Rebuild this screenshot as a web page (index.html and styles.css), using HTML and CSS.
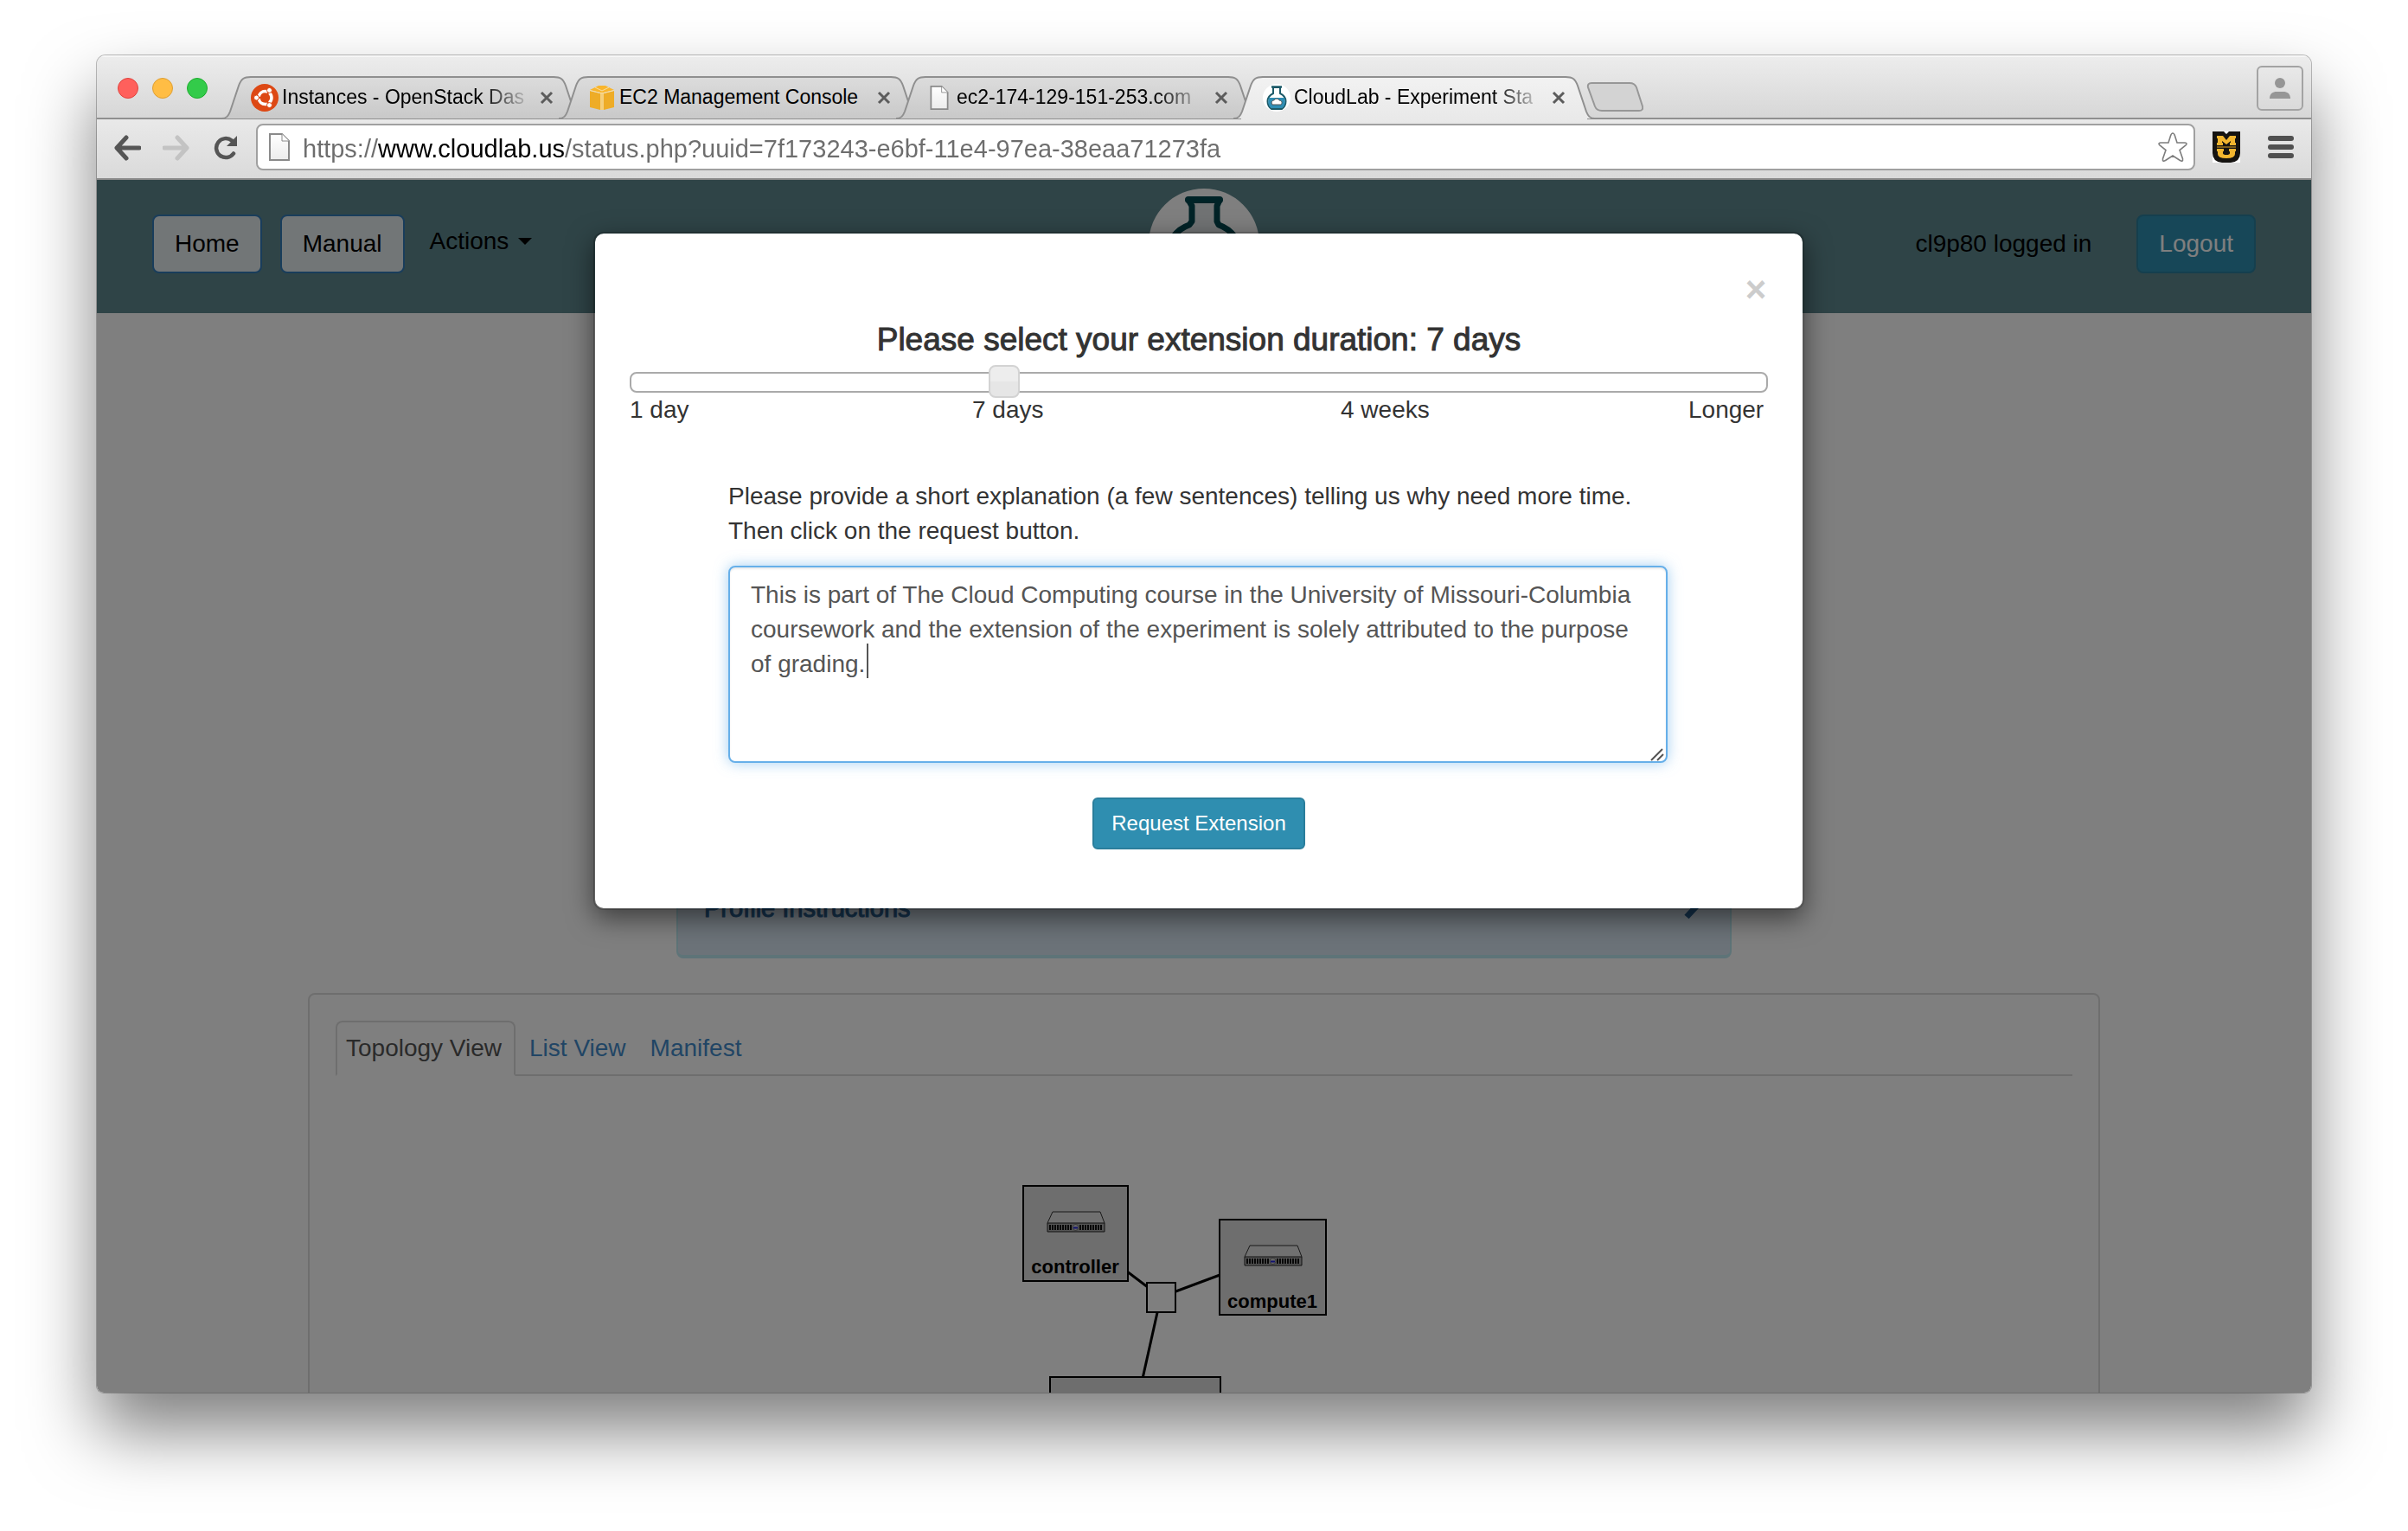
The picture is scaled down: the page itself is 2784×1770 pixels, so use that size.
FILE: index.html
```html
<!DOCTYPE html>
<html lang="en">
<head>
<meta charset="utf-8">
<title>CloudLab - Experiment Status</title>
<link rel="stylesheet" href="styles.css">
</head>
<body>
<svg width="0" height="0" class="defs" aria-hidden="true">
  <defs>
    <linearGradient id="tabFill" x1="0" y1="0" x2="0" y2="1"><stop offset="0" stop-color="#dcdcdc"/><stop offset="1" stop-color="#c9c9c9"/></linearGradient>
    <linearGradient id="tabActive" x1="0" y1="0" x2="0" y2="1"><stop offset="0" stop-color="#f2f2f2"/><stop offset="1" stop-color="#e9e9e9"/></linearGradient>
    <linearGradient id="pageFill" x1="0" y1="0" x2="0" y2="1"><stop offset="0" stop-color="#fff"/><stop offset="1" stop-color="#ececec"/></linearGradient>
    <symbol id="tabShape" viewBox="0 0 418 50">
      <path d="M0 49C6 49 8 46 10 41L20 11C23 3 26 1 34 1H384C392 1 395 3 398 11L408 41C410 46 412 49 418 49" stroke="#8f8f8f" stroke-width="2"/>
    </symbol>
    <symbol id="page" viewBox="0 0 24 32">
      <path d="M1 1H15L23 9V31H1Z" fill="url(#pageFill)" stroke="#8a8a8a" stroke-width="2"/>
      <path d="M15 1V9H23" fill="#fff" stroke="#8a8a8a" stroke-width="1"/>
    </symbol>
    <symbol id="cross" viewBox="0 0 20 20">
      <path d="M4 4L16 16M16 4L4 16" stroke="#5c5c5c" stroke-width="3"/>
    </symbol>
    <symbol id="server" viewBox="0 0 68 25">
      <path d="M1 14L7 1H62L67 14" fill="#e0e0e0" stroke="#333"/>
      <path d="M1 14H67V24H1Z" fill="#aaa" stroke="#222"/>
      <path d="M3 19H29M38 19H65" stroke="#111" stroke-width="6" stroke-dasharray="2 1"/>
      <circle cx="33.500" cy="19" r="3.500" fill="#ccc" stroke="#444" stroke-width=".6"/>
      <path d="M31 18.500H36V20.500H31Z" fill="#2222dd"/>
    </symbol>
  </defs>
</svg>

<div class="window">
  <div class="tabstrip">
    <div class="lights"><span class="light red"></span><span class="light amber"></span><span class="light green"></span></div>
    <div class="tabs">
      <div class="tab">
        <svg class="tab-bg" fill="url(#tabFill)"><use href="#tabShape"/></svg>
        <svg class="favicon" viewBox="0 0 32 32"><circle cx="16" cy="16" r="16" fill="#dd4814"/><circle cx="16.500" cy="16" r="7.500" fill="none" stroke="#fff" stroke-width="3.500" stroke-dasharray="13.200 2.500" stroke-dashoffset="6.600"/><g fill="#fff" stroke="#dd4814"><circle cx="6.500" cy="16" r="3"/><circle cx="21.500" cy="7.400" r="3"/><circle cx="21.500" cy="24.600" r="3"/></g></svg>
        <span class="tab-title faded">Instances - OpenStack Das</span>
        <button class="tab-close" aria-label="Close tab"><svg><use href="#cross"/></svg></button>
      </div>
      <div class="tab">
        <svg class="tab-bg" fill="url(#tabFill)"><use href="#tabShape"/></svg>
        <svg class="favicon" viewBox="0 0 32 32"><path d="M2 7L12 2H20L30 7L18 10H14Z" fill="#f9b52c"/><path d="M2 8L14 11V30L2 27Z" fill="#eeac27"/><path d="M30 8L18 11V30L30 27Z" fill="#eeac27"/><path d="M14 11H18V30H14Z" fill="#f5cf7c"/><path d="M2 7.500L14 10.500H18L30 7.500M8 4L16 8L24 4" fill="none" stroke="#f8dfa6" stroke-width="1"/></svg>
        <span class="tab-title">EC2 Management Console</span>
        <button class="tab-close" aria-label="Close tab"><svg><use href="#cross"/></svg></button>
      </div>
      <div class="tab">
        <svg class="tab-bg" fill="url(#tabFill)"><use href="#tabShape"/></svg>
        <svg class="favicon favicon-page"><use href="#page"/></svg>
        <span class="tab-title faded">ec2-174-129-151-253.com</span>
        <button class="tab-close" aria-label="Close tab"><svg><use href="#cross"/></svg></button>
      </div>
      <div class="tab active">
        <svg class="tab-bg" fill="url(#tabActive)"><use href="#tabShape"/></svg>
        <svg class="favicon" viewBox="0 0 32 32"><circle cx="16" cy="16" r="16" fill="#fff"/><path d="M12 4V11C8 13 5.500 16 5.500 20C5.500 24 8 27.500 10 29H22C24 27.500 26.500 24 26.500 20C26.500 16 24 13 20 11V4Z" fill="#fff" stroke="#1d5a68" stroke-width="2"/><path d="M7 16H25C27 22 25 26 22 28H10C7 26 5 22 7 16Z" fill="#2f8eb4"/><path d="M10 3.500H22" stroke="#1d5a68" stroke-width="2.500"/><path d="M11 24C9 21 11 19 13 19C14 16.500 18 16.500 19 19C22 19 23 22 21 24Z" fill="#fff" stroke="#555" stroke-width="1"/></svg>
        <span class="tab-title faded">CloudLab - Experiment Sta</span>
        <button class="tab-close" aria-label="Close tab"><svg><use href="#cross"/></svg></button>
      </div>
    </div>
    <button class="newtab" aria-label="New tab"><svg viewBox="0 0 66 34"><path d="M6 1H50Q56 1 58 6L65 28Q66 33 61 33H18Q12 33 10 28L2 6Q1 1 6 1Z" fill="#d3d3d3" stroke="#979797" stroke-width="2"/></svg></button>
    <button class="user" aria-label="User"><svg viewBox="0 0 26 26"><ellipse cx="13" cy="7" rx="6" ry="6" fill="#969696"/><path d="M1 25C1 19 5 17 9 17H17C21 17 25 19 25 25Z" fill="#969696"/></svg></button>
  </div>

  <div class="toolbar">
    <button class="nav-btn" aria-label="Back"><svg viewBox="0 0 32 32"><path d="M15 5L4 17L15 29M5 17H30" fill="none" stroke="#555" stroke-width="5" stroke-linecap="round" stroke-linejoin="round"/></svg></button>
    <button class="nav-btn" aria-label="Forward"><svg viewBox="0 0 32 32"><path d="M17 5L28 17L17 29M27 17H2" fill="none" stroke="#c3c3c3" stroke-width="5" stroke-linecap="round" stroke-linejoin="round"/></svg></button>
    <button class="nav-btn" aria-label="Reload"><svg viewBox="0 0 32 32"><path d="M25 23.500A11 11 0 1 1 23 8.500" fill="none" stroke="#555" stroke-width="4.500" stroke-linecap="round"/><path d="M29 3V15H17Z" fill="#555"/></svg></button>
    <div class="omnibox">
      <svg class="page-icon"><use href="#page"/></svg>
      <input class="url" type="text" aria-label="Address" value="https://www.cloudlab.us/status.php?uuid=7f173243-e6bf-11e4-97ea-38eaa71273fa">
      <svg class="star" viewBox="0 0 36 36"><path d="M18 2Q19.500 2 20.500 5L23 13H32Q35.500 13.500 33 16L26 21.500L29.500 31.500Q30 35.500 26.500 33.500L18 28L9.500 33.500Q6 35.500 6.500 31.500L10 21.500L3 16Q.5 13.500 4 13H13L15.500 5Q16.500 2 18 2Z" fill="#fff" stroke="#7d7d7d" stroke-width="1.600"/></svg>
    </div>
    <svg class="mu" viewBox="0 0 32 36"><path d="M0 0H32V36H0Z" fill="#fff"/><path d="M0 0H13L16 3L19 0H32V25Q32 35 21 36H11Q0 35 0 25Z" fill="#151310"/><path d="M5 5H12L16 10L20 5H27V8H26V13H27V16H20V13H21V11L16 15L11 11V13H12V16H5V13H6V8H5Z" fill="#f2b52f"/><path d="M5 20H13V23H12V25Q12 27 16 27Q20 27 20 25V23H19V20H27V23H26V26Q26 31 16 31Q6 31 6 26V23H5Z" fill="#f2b52f"/><path d="M5 17H27V19H5Z" fill="#7a5c1c"/></svg>
    <button class="menu" aria-label="Menu"><svg viewBox="0 0 30 26"><path d="M3 3H27M3 13H27M3 23H27" stroke="#505050" stroke-width="6" stroke-linecap="round"/></svg></button>
  </div>

  <div class="viewport">
    <header class="navbar">
      <nav class="nav-left">
        <a class="btn btn-light" href="#">Home</a>
        <a class="btn btn-light" href="#">Manual</a>
        <a class="dropdown" href="#">Actions <span class="caret"></span></a>
      </nav>
      <svg class="logo" viewBox="0 0 128 128"><circle cx="64" cy="64" r="64" fill="#fff"/><path d="M46 13H82L79 20V38L81 42Q104 50 108 80Q106 110 64 114Q22 110 20 80Q24 50 47 42L50 38V20Z" fill="#e2e7e9" stroke="#00464f" stroke-width="7" stroke-linejoin="round"/><path d="M46 13H82" stroke="#00464f" stroke-width="8" stroke-linecap="round"/></svg>
      <div class="nav-right">
        <span>cl9p80 logged in</span>
        <button class="btn btn-primary">Logout</button>
      </div>
    </header>
    <main class="content">
      <a class="instructions" href="#"><span>Profile Instructions</span>
        <svg viewBox="0 0 22 34"><path d="M4 4L16 17L4 30" fill="none" stroke="#2a6496" stroke-width="7"/></svg></a>
      <section class="panel">
        <div class="view-tabs">
          <a class="view-tab current" href="#">Topology View</a>
          <a class="view-tab" href="#">List View</a>
          <a class="view-tab" href="#">Manifest</a>
        </div>
        <svg class="topology" viewBox="0 0 640 420">
          <g stroke="#000" stroke-width="3"><path d="M172 121L270 195.500L400 147"/><path d="M270 195.500L240 330"/></g>
          <g fill="#dcdcdc" stroke="#000" stroke-width="2">
            <path d="M111 67H232V177H111Z"/>
            <path d="M338 106H461V216H338Z"/>
            <path d="M142 288H339V398H142Z"/>
            <path d="M254 179H287V213H254Z" fill="#fff"/>
          </g>
          <use href="#server" x="138" y="96" width="68" height="25"/>
          <use href="#server" x="366" y="135" width="68" height="25"/>
          <text x="171" y="168">controller</text>
          <text x="399" y="208">compute1</text>
        </svg>
      </section>
    </main>

    <div class="backdrop">
      <form class="modal" role="dialog" aria-labelledby="duration-title">
        <button class="close" type="button" aria-label="Close">×</button>
        <h4 id="duration-title"><label for="duration">Please select your extension duration: 7 days</label></h4>
        <input class="slider" id="duration" type="range" min="0" max="1000" value="324">
        <div class="ticks"><span>1 day</span><span>7 days</span><span>4 weeks</span><span>Longer</span></div>
        <div class="reason">
          <label for="why">Please provide a short explanation (a few sentences) telling us why need more time. Then click on the request button.</label>
          <div class="field">
            <textarea id="why" rows="5">This is part of The Cloud Computing course in the University of Missouri-Columbia coursework and the extension of the experiment is solely attributed to the purpose of grading.</textarea>
            <span class="text-caret"></span>
            <svg class="grip" viewBox="0 0 16 16"><path d="M1 15L14 2M8 15L15 8" stroke="#555" stroke-width="2"/></svg>
          </div>
        </div>
        <button class="btn btn-primary btn-small" type="button">Request Extension</button>
      </form>
    </div>
  </div>
</div>
</body>
</html>
```
FILE: styles.css
```css
* { box-sizing: border-box; }
html, body { height: 100%; }
body {
  margin: 0;
  background: #fff;
  font: 28px/40px "Liberation Sans", Arial, sans-serif;
  color: #333;
  overflow: hidden;
}
button { font: inherit; color: inherit; padding: 0; border: 0; background: none; }
a { text-decoration: none; color: #428bca; }
svg { display: block; flex: none; }
.defs { position: absolute; }

/* Browser window */
.window {
  margin: 64px 112px 0;
  height: calc(100vh - 224px);
  display: flex;
  flex-direction: column;
  border-radius: 10px 10px 8px 8px;
  overflow: hidden;
  box-shadow: 0 0 0 1px rgba(0, 0, 0, .25), 0 44px 80px rgba(0, 0, 0, .5);
}
.tabstrip {
  flex: none;
  height: 74px;
  display: flex;
  align-items: flex-end;
  background: linear-gradient(#ececec, #d6d6d6);
  border-top: 2px solid #f6f6f6;
  box-shadow: inset 0 -2px #8f8f8f;
}
.lights { display: flex; gap: 16px; padding: 0 16px 24px 24px; }
.light { width: 24px; height: 24px; border-radius: 50%; border: 1px solid #e0443e; background: #ff605c; }
.amber { background: #ffbd44; border-color: #de9f34; }
.green { background: #33cb4a; border-color: #1fad2f; }
.tabs { display: flex; }
.tab {
  position: relative;
  width: 418px;
  height: 50px;
  padding-left: 34px;
  display: flex;
  align-items: center;
  gap: 4px;
}
.tab + .tab { margin-left: -28px; }
.active { z-index: 1; }
.active::before { content: ""; position: absolute; left: 9px; right: 9px; bottom: 0; height: 2px; background: #e9e9e9; }
.tab-bg { position: absolute; inset: 0; width: 100%; height: 100%; }
.favicon { position: relative; width: 32px; height: 32px; }
.favicon-page { padding: 2px; }
.tab-title {
  position: relative;
  width: 288px;
  padding-bottom: 2px;
  font-size: 23px;
  line-height: 32px;
  color: #000;
  white-space: nowrap;
}
.faded {
  -webkit-mask-image: linear-gradient(90deg, #000 230px, transparent 290px);
  mask-image: linear-gradient(90deg, #000 230px, transparent 290px);
}
.tab-close { position: relative; margin-left: 4px; }
.tab-close svg { width: 20px; height: 20px; }
.newtab { margin: 0 0 9px -10px; }
.newtab svg { width: 66px; height: 34px; }
.user {
  margin: 0 9px 10px auto;
  width: 54px;
  height: 52px;
  display: grid;
  place-items: center;
  border: 2px solid #a3a3a3;
  border-radius: 6px;
}
.user svg { width: 26px; height: 26px; }

.toolbar {
  flex: none;
  height: 70px;
  padding: 6px 20px 10px 19px;
  display: flex;
  align-items: center;
  background: linear-gradient(#e9e9e9, #dadada);
  border-bottom: 2px solid #8a8a8a;
}
.nav-btn { margin-right: 25px; }
.nav-btn svg { width: 32px; height: 32px; }
.nav-btn + .nav-btn + .nav-btn { margin-right: 19px; }
.omnibox {
  flex: 1;
  height: 54px;
  padding: 0 6px 0 13px;
  display: flex;
  align-items: center;
  background: #fff;
  border: 2px solid #a0a0a0;
  border-radius: 8px;
}
.page-icon { width: 24px; height: 32px; }
.url {
  flex: 1;
  margin-left: 15px;
  padding: 3px 0 0;
  border: 0;
  outline: 0;
  font: inherit;
  font-size: 29px;
  color: transparent;
  background: linear-gradient(90deg, #6d6d6d 87px, #000 87px 303px, #6d6d6d 303px);
  -webkit-background-clip: text;
  background-clip: text;
}
.star { width: 36px; height: 36px; }
.mu { width: 32px; height: 36px; margin: 0 32px 0 20px; }
.menu svg { width: 30px; height: 26px; }

/* Page */
.viewport { position: relative; flex: 1; min-height: 0; overflow: hidden; background: #fff; }
.navbar {
  height: 154px;
  padding: 10px 64px;
  display: grid;
  grid-template-columns: 1fr 128px 1fr;
  background: #5e888e;
}
.nav-left, .nav-right { display: flex; align-items: flex-start; padding-top: 30px; color: #000; }
.nav-left { gap: 21px; }
.nav-right { justify-content: flex-end; gap: 52px; }
.nav-right span { padding-top: 14px; }
.logo { width: 128px; height: 128px; }
.btn { padding: 12px 24px; border: 2px solid; border-radius: 8px; line-height: 40px; }
.btn-light { background: #e5ecee; border-color: #337ab7; color: #000; }
.btn-primary { background: #2f8eb0; border-color: #2a7e9c; color: #fff; }
.dropdown { display: flex; align-items: center; gap: 11px; padding: 11px 8px; color: #000; }
.caret { border: 8px solid transparent; border-top-color: #000; border-bottom: 0; }

.content { padding-top: 640px; }
.instructions {
  max-width: 1220px;
  margin: 0 auto 40px;
  padding: 26px 32px 34px 30px;
  display: flex;
  justify-content: space-between;
  border: 2px solid #bce8f1;
  border-bottom-width: 4px;
  border-radius: 8px;
  background: #d9e6f2;
  color: #2a6496;
  font-size: 29px;
  -webkit-text-stroke: 1px #2a6496;
}
.instructions svg { width: 22px; height: 34px; }
.panel {
  max-width: 2072px;
  margin: 0 auto;
  padding: 30px;
  border: 2px solid #ddd;
  border-radius: 8px;
}
.view-tabs { display: flex; gap: 4px; border-bottom: 2px solid #ddd; }
.view-tab { margin-bottom: -2px; padding: 10px; border: 2px solid transparent; border-radius: 8px 8px 0 0; }
.current { padding-right: 14px; background: #fff; border-color: #ddd #ddd #fff; color: #555; }
.topology { width: 640px; height: 420px; margin: 60px auto 0; fill: none; }
.topology text { font-size: 22px; font-weight: bold; text-anchor: middle; fill: #000; }

/* Extension dialog */
.backdrop {
  position: absolute;
  inset: 0;
  padding: 60px 12px 0 0;
  background: rgba(0, 0, 0, .5);
}
.modal {
  max-width: 1400px;
  margin: 0 auto;
  padding: 44px 40px 68px;
  display: flex;
  flex-direction: column;
  background: #fff;
  background-clip: padding-box;
  border: 2px solid rgba(0, 0, 0, .2);
  border-radius: 12px;
  box-shadow: 0 10px 30px rgba(0, 0, 0, .5);
}
.close { align-self: flex-end; font-size: 42px; line-height: 42px; font-weight: bold; color: #ccc; width: 28px; }
.modal h4 {
  margin: 17px 0;
  font-size: 37px;
  line-height: 40px;
  font-weight: normal;
  text-align: center;
  -webkit-text-stroke: 1px #333;
}
.slider { -webkit-appearance: none; appearance: none; width: 100%; height: 24px; margin: 0; background: none; }
.slider::-webkit-slider-runnable-track { height: 24px; border: 2px solid #aaa; border-radius: 8px; background: #fff; }
.slider::-webkit-slider-thumb {
  -webkit-appearance: none;
  width: 36px;
  height: 38px;
  margin-top: -10px;
  border: 2px solid #d3d3d3;
  border-radius: 8px;
  background: linear-gradient(#ededed 50%, #e6e6e6 50%);
}
.ticks { display: grid; grid-template-columns: 396fr 426fr 402fr 92fr; }
.reason { padding: 60px 116px 40px 114px; }
.reason label { display: block; padding-right: 20px; }
.field { position: relative; margin-top: 20px; }
.field textarea {
  display: block;
  width: 100%;
  height: 228px;
  padding: 12px 20px 12px 24px;
  font: inherit;
  color: #555;
  border: 2px solid #66afe9;
  border-radius: 8px;
  outline: 0;
  resize: none;
  box-shadow: inset 0 2px 2px rgba(0, 0, 0, .08), 0 0 16px rgba(102, 175, 233, .6);
}
.text-caret { position: absolute; left: 160px; top: 90px; width: 2px; height: 40px; background: #555; }
.grip { position: absolute; right: 4px; bottom: 2px; width: 16px; height: 16px; }
.btn-small { align-self: center; padding: 10px 20px; border-radius: 6px; font-size: 24px; line-height: 36px; }
```
